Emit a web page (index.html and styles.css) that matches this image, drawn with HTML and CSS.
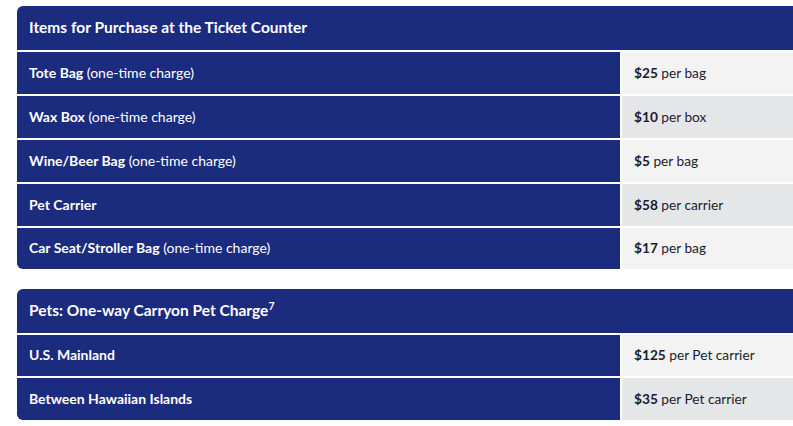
FILE: index.html
```html
<!DOCTYPE html>
<html lang="en">
<head>
<meta charset="utf-8">
<title>Fees</title>
<link rel="stylesheet" href="styles.css">
</head>
<body>
<div class="page">
  <div class="fee-table">
    <div class="head"><span>Items for Purchase at the Ticket Counter</span></div>
    <div class="row">
      <div class="label"><span><b>Tote Bag</b> (one-time charge)</span></div>
      <div class="price light"><span><b>$25</b> per bag</span></div>
    </div>
    <div class="row">
      <div class="label"><span><b>Wax Box</b> (one-time charge)</span></div>
      <div class="price gray"><span><b>$10</b> per box</span></div>
    </div>
    <div class="row">
      <div class="label"><span><b>Wine/Beer Bag</b> (one-time charge)</span></div>
      <div class="price light"><span><b>$5</b> per bag</span></div>
    </div>
    <div class="row">
      <div class="label"><span><b>Pet Carrier</b></span></div>
      <div class="price gray"><span><b>$58</b> per carrier</span></div>
    </div>
    <div class="row short">
      <div class="label"><span><b>Car Seat/Stroller Bag</b> (one-time charge)</span></div>
      <div class="price light"><span><b>$17</b> per bag</span></div>
    </div>
  </div>

  <div class="fee-table">
    <div class="head"><span>Pets: One-way Carryon Pet Charge<sup>7</sup></span></div>
    <div class="row short">
      <div class="label"><span><b>U.S. Mainland</b></span></div>
      <div class="price light"><span><b>$125</b> per Pet carrier</span></div>
    </div>
    <div class="row">
      <div class="label"><span><b>Between Hawaiian Islands</b></span></div>
      <div class="price gray"><span><b>$35</b> per Pet carrier</span></div>
    </div>
  </div>
</div>
</body>
</html>
```

FILE: styles.css
```css
html, body {
  margin: 0;
  padding: 0;
  background: #ffffff;
  overflow: hidden;
}
body {
  font-family: Lato, "Open Sans", sans-serif;
  color: #ffffff;
}
.page {
  padding: 6px 0 0 17px;
  display: flex;
  flex-direction: column;
  gap: 20px;
  width: 820px;
}
.fee-table {
  display: flex;
  flex-direction: column;
  gap: 2px;
  border-radius: 6px 0 0 6px;
  overflow: hidden;
  width: 800px;
}
.head {
  background: #1b2b7e;
  height: 44px;
  box-sizing: border-box;
  padding: 0 0 2px 12px;
  display: flex;
  align-items: center;
  font-weight: 700;
  font-size: 15.5px;
}
.head sup {
  font-size: 10.5px;
  vertical-align: super;
  line-height: 0;
}
.row {
  display: grid;
  grid-template-columns: 603px 1fr;
  column-gap: 2px;
  height: 42px;
}
.row.short { height: 41px; }
.label {
  background: #1b2b7e;
  display: flex;
  align-items: center;
  padding: 0 0 2px 12px;
  font-size: 14px;
  color: #ffffff;
}
.label b { font-weight: 700; }
.price {
  display: flex;
  align-items: center;
  padding: 0 0 2px 12px;
  font-size: 13.7px;
  color: #1a1d2e;
}
.price b { font-weight: 700; }
.light { background: #f3f3f3; }
.gray { background: #e5e6e8; }
```
